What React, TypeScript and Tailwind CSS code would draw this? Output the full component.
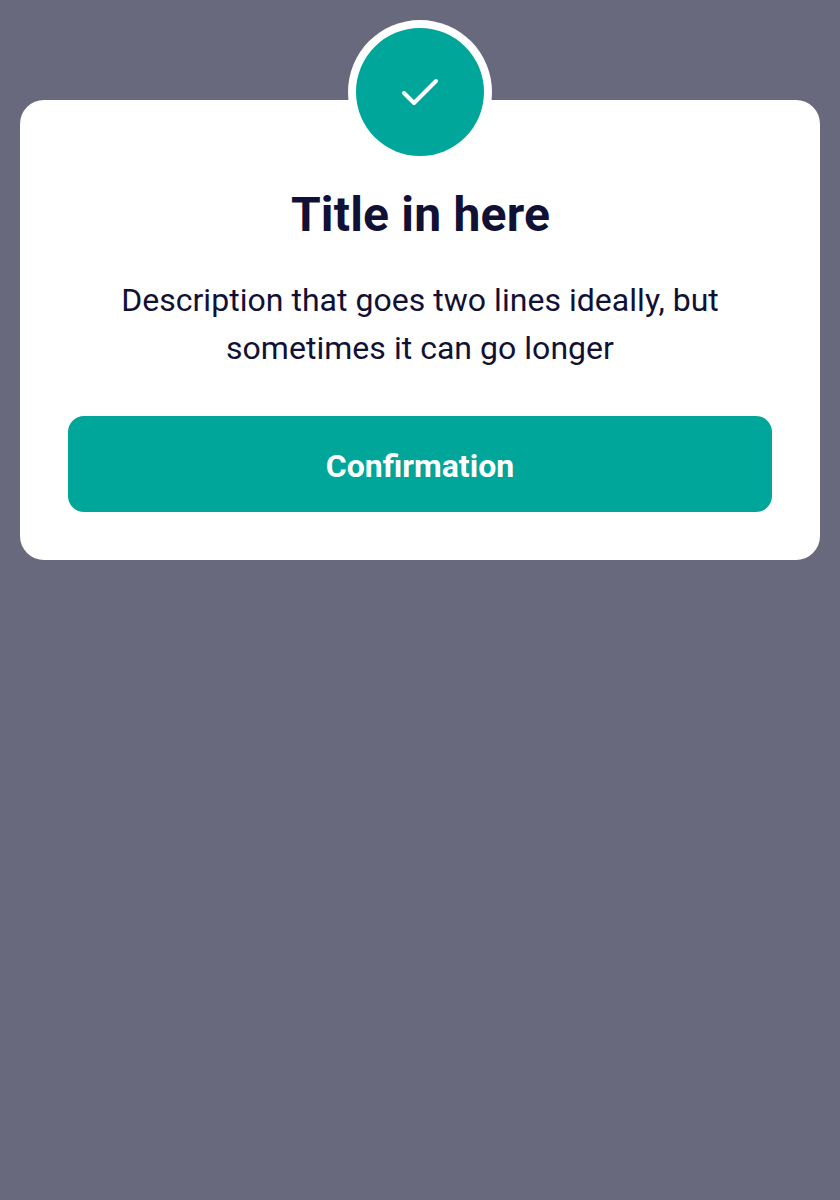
function CheckIcon() {
  return (
    <svg width="64" height="64" viewBox="0 0 64 64" fill="none" aria-hidden="true">
      <path d="M16 33L26 43L48 21" stroke="white" strokeWidth="4" strokeLinecap="round" strokeLinejoin="round" />
    </svg>
  );
}

export default function App() {
  return (
    <main className="min-h-screen bg-[#69697e] px-5 pt-[100px] font-['Roboto',sans-serif] text-[#111136]">
      <section className="flex flex-col items-center rounded-3xl bg-white px-12 pb-12 text-center">
        <div className="-mt-20 flex size-36 items-center justify-center rounded-full bg-white">
          <div className="flex size-32 items-center justify-center rounded-full bg-[#00a699]">
            <CheckIcon />
          </div>
        </div>
        <h1 className="mt-[19px] pl-px text-[48px] leading-[64px] font-bold tracking-[0.2px]">Title in here</h1>
        <p className="mt-[29px] w-[640px] text-[32px] leading-[48px] tracking-[0.03px]">
          Description that goes two lines ideally, but sometimes it can go longer
        </p>
        <button className="mt-11 h-24 w-full rounded-2xl bg-[#00a699] pt-1 text-[32px] leading-[48px] font-bold text-white">
          Confirmation
        </button>
      </section>
    </main>
  );
}
